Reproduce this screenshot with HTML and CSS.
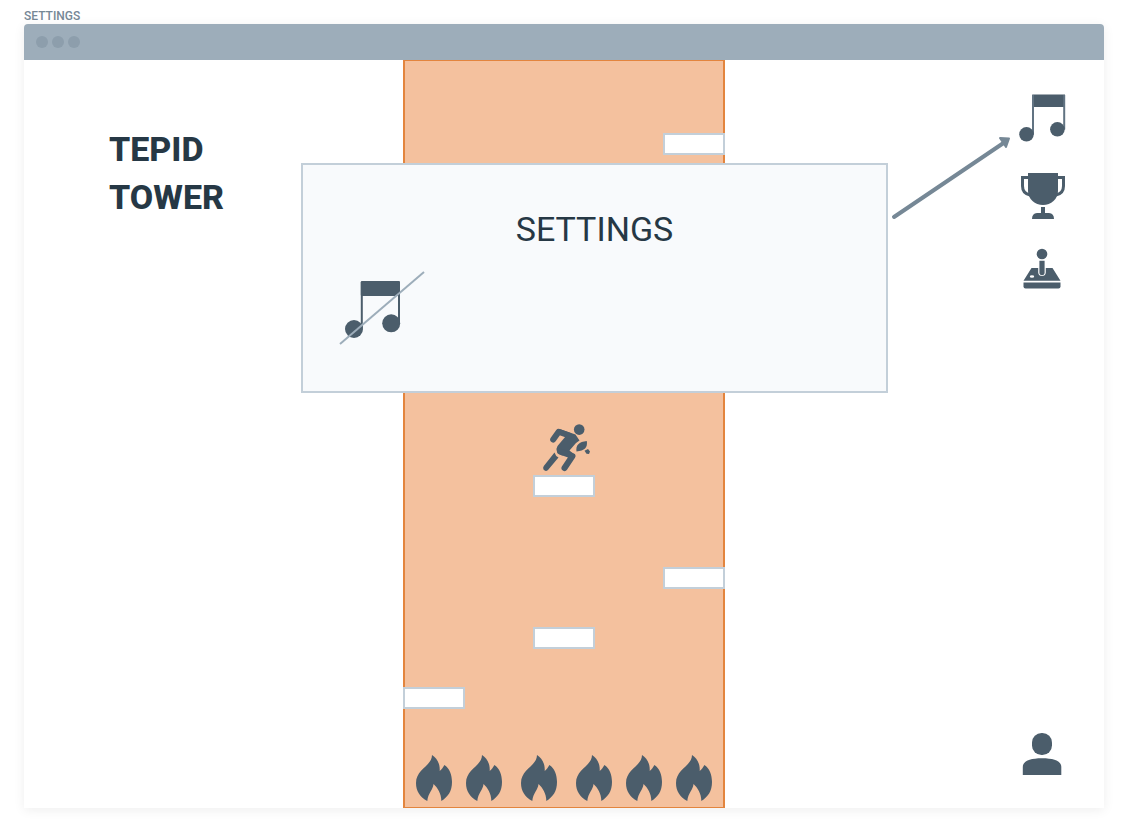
FILE: index.html
```html
<!DOCTYPE html>
<html lang="en">
<head>
<meta charset="utf-8">
<meta name="viewport" content="width=device-width, initial-scale=1">
<title>Tepid Tower – Settings</title>
<link rel="stylesheet" href="styles.css">
</head>
<body class="page">
<svg class="defs" aria-hidden="true">
  <symbol id="flame" viewBox="0 0 36 46">
    <path d="M16 0C21 3 24.200 9 23.700 16C25.500 14.500 27.500 12 28.300 10C33.500 13 36 20 36 27C36 36 32 42 25.300 46C25.500 39 21.500 32.500 17.500 29C17 35 12 38 11.300 46C4 42 0 36 0 28C0 14 16 11 16 0Z"/>
  </symbol>
</svg>
<p class="frame-label">SETTINGS</p>
<div class="window">
  <header class="titlebar">
    <span class="dot"></span><span class="dot"></span><span class="dot"></span>
  </header>
  <main class="stage">
    <h1 class="logo">TEPID<br>TOWER</h1>

    <section class="tower" aria-label="Game">
      <div class="platform p1"></div>
      <div class="platform p2"></div>
      <div class="platform p3"></div>
      <div class="platform p4"></div>
      <div class="platform p5"></div>
      <svg class="runner" viewBox="0 0 52 50" role="img" aria-label="Runner">
        <circle cx="39.200" cy="7.600" r="5.300"/>
        <path d="M18 7.200Q19.500 6.800 21 7.400L35.500 12.500L39.500 18.500L36 21L29.500 28.500L33 31.500L22 33.500Q14 30 17.500 24L25.500 14.500L19 12Z"/>
        <path class="limb" d="M13.200 17.500L18.700 9.700L29 13.500M20 29.500L32.500 34L24.500 46"/>
        <path d="M14.500 30.500Q15.500 34 18.500 35.500L8 48Q5.500 50 3.500 47.500Q2.600 45.500 3.800 44Z"/>
        <path d="M36.500 29.500Q35 20 46.800 19Q48.500 28.500 36.500 29.500Z"/>
        <path d="M44.500 28.700L48 27L50 29.500L49 32L46.500 31.800Z"/>
      </svg>
      <div class="flames">
        <div class="flame-group">
          <svg class="flame"><use href="#flame"/></svg>
          <svg class="flame"><use href="#flame"/></svg>
        </div>
        <div class="flame-group">
          <svg class="flame"><use href="#flame"/></svg>
        </div>
        <div class="flame-group">
          <svg class="flame"><use href="#flame"/></svg>
          <svg class="flame"><use href="#flame"/></svg>
          <svg class="flame"><use href="#flame"/></svg>
        </div>
      </div>
    </section>

    <nav class="side" aria-label="Menu">
      <div class="side-top">
        <button class="icon-button" type="button" aria-label="Music">
          <svg width="48" height="50" viewBox="0 0 48 50">
            <path d="M14.200 .5H47V13H14.200Z"/>
            <path class="stem" d="M15 1V40.500M46.200 1V35.500"/>
            <circle cx="8.500" cy="40.300" r="7.300"/><circle cx="39.400" cy="35.300" r="7.300"/>
          </svg>
        </button>
        <button class="icon-button" type="button" aria-label="Trophies">
          <svg width="48" height="48" viewBox="0 0 48 48">
            <path d="M10 1H40V19C40 27 33 33 25 33S10 27 10 19Z"/>
            <path class="handle" d="M11 5.500H4.500V14Q4.500 21.500 12 23M39 5.500H45.500V14Q45.500 21.500 38 23"/>
            <path d="M23 35H27V41H31Q36 41.500 36 47H14Q14 41.500 19 41H23Z"/>
          </svg>
        </button>
        <button class="icon-button" type="button" aria-label="Game controls">
          <svg width="40" height="42" viewBox="0 0 40 42">
            <path fill-rule="evenodd" d="M9.500 20H16.200V24.500C16.200 29.300 23.800 29.300 23.800 24.500V20H30.500L38.500 32.700H1.500ZM7.800 28.500A2.200 1.300 0 1 0 12.200 28.500A2.200 1.300 0 1 0 7.800 28.500Z"/>
            <circle cx="20" cy="6" r="5.300"/>
            <path d="M17.400 12.700H22.600V24.500Q22.600 27.200 20 27.200T17.400 24.500Z"/>
            <path d="M1.500 34.600H38.500V38.500Q38.500 40.500 36.500 40.500H3.500Q1.500 40.500 1.500 38.500Z"/>
          </svg>
        </button>
      </div>
      <button class="icon-button" type="button" aria-label="Profile">
        <svg width="40" height="42" viewBox="0 0 40 42">
          <rect x="10" width="20" height="22" rx="9.600"/>
          <path d="M.8 42V34C.8 28.500 7 25.300 20 25.300S39.300 28.500 39.300 34V42Z"/>
        </svg>
      </button>
    </nav>

    <section class="dialog" role="dialog" aria-labelledby="dialog-title">
      <h2 class="dialog-title" id="dialog-title">SETTINGS</h2>
      <button class="icon-button mute" type="button" aria-label="Turn music off">
        <svg width="88" height="76" viewBox="0 0 88 76">
          <rect x="22.800" y="11" width="39.200" height="15" rx="1"/>
          <path class="stem-large" d="M23.800 12V58M61 12V54"/>
          <circle cx="16" cy="59" r="9"/><circle cx="53.200" cy="53.300" r="9"/>
          <path class="slash" d="M2 74L86 2"/>
        </svg>
      </button>
    </section>

    <svg class="arrow" viewBox="0 0 124 88" aria-hidden="true">
      <path class="arrow-line" d="M6 83L117 8"/>
      <path class="arrow-head" d="M112 4L121 4.500L118 13Z"/>
    </svg>
  </main>
</div>
</body>
</html>
```
FILE: styles.css
```css
* { box-sizing: border-box; }

.page {
  margin: 0;
  padding: 9px 24px 24px;
  min-height: 100vh;
  display: flex;
  flex-direction: column;
  background: #fff;
  color: #263845;
  font-family: Roboto, "Liberation Sans", sans-serif;
}

.defs { position: absolute; width: 0; height: 0; }

.frame-label {
  margin: 0;
  font-size: 12px;
  line-height: 15px;
  font-weight: 500;
  color: #768896;
}

.window {
  flex: 1;
  display: flex;
  flex-direction: column;
  border-radius: 4px 4px 0 0;
  background: #fff;
  box-shadow: 0 2px 12px rgba(0, 0, 0, 0.07);
}

.titlebar {
  display: flex;
  align-items: center;
  gap: 4px;
  height: 36px;
  padding: 0 12px;
  border-radius: 4px 4px 0 0;
  background: #9dadba;
}

.dot {
  width: 12px;
  height: 12px;
  border-radius: 50%;
  background: #8d9eac;
}

.stage {
  position: relative;
  flex: 1;
  display: grid;
  grid-template-columns: 1fr 322px 1fr;
  min-height: 748px;
}

.logo {
  margin: 0;
  padding: 65px 0 0 85px;
  font-size: 34px;
  line-height: 48px;
  font-weight: 800;
}

.tower {
  position: relative;
  display: flex;
  flex-direction: column;
  justify-content: flex-end;
  border: solid #e3853e;
  border-width: 1px 2px;
  background: #f4c19e;
}

.platform {
  position: absolute;
  width: 62px;
  height: 22px;
  border: 2px solid #c3cfd9;
  background: #fff;
}

.p1 { left: 258px; top: 72px; }
.p2 { left: 128px; top: 414px; }
.p3 { left: 258px; top: 506px; }
.p4 { left: 128px; top: 566px; }
.p5 { left: -2px; top: 626px; }

.runner {
  position: absolute;
  left: 135px;
  top: 361px;
  width: 52px;
  height: 50px;
  fill: #4b5d6b;
}

.limb {
  fill: none;
  stroke: #4b5d6b;
  stroke-width: 6;
  stroke-linecap: round;
  stroke-linejoin: round;
}

.flames {
  display: flex;
  justify-content: center;
  gap: 19px;
  padding-bottom: 6px;
}

.flame-group { display: flex; gap: 14px; }
.flame { width: 36px; height: 46px; fill: #4b5d6b; }

.side {
  display: flex;
  flex-direction: column;
  align-items: flex-end;
  justify-content: space-between;
  padding: 34px 36px 33px;
}

.side-top {
  display: flex;
  flex-direction: column;
  gap: 28px;
}

.side .icon-button { width: 52px; }

.icon-button {
  display: flex;
  justify-content: center;
  padding: 0;
  border: 0;
  background: none;
  fill: #4b5d6b;
  cursor: pointer;
}

.stem { fill: none; stroke: #617382; stroke-width: 2; }
.stem-large { fill: none; stroke: #4b5d6b; stroke-width: 2; }
.handle { fill: none; stroke: #4b5d6b; stroke-width: 3; }
.slash { fill: none; stroke: #9dadba; stroke-width: 2; }

.dialog {
  position: absolute;
  left: calc(50% - 263px);
  top: 103px;
  width: 587px;
  min-height: 230px;
  padding: 40px 35px;
  border: 2px solid #c3cfd9;
  background: #f8fafc;
}

.dialog-title {
  margin: 0;
  font-size: 34px;
  line-height: 48px;
  font-weight: 400;
  text-align: center;
}

.mute { margin-top: 17px; }

.arrow {
  position: absolute;
  left: calc(50% + 324px);
  top: 74px;
  width: 124px;
  height: 88px;
}

.arrow-line { fill: none; stroke: #768896; stroke-width: 4; stroke-linecap: round; }
.arrow-head { fill: #768896; stroke: #768896; stroke-width: 2; stroke-linejoin: round; }
```
